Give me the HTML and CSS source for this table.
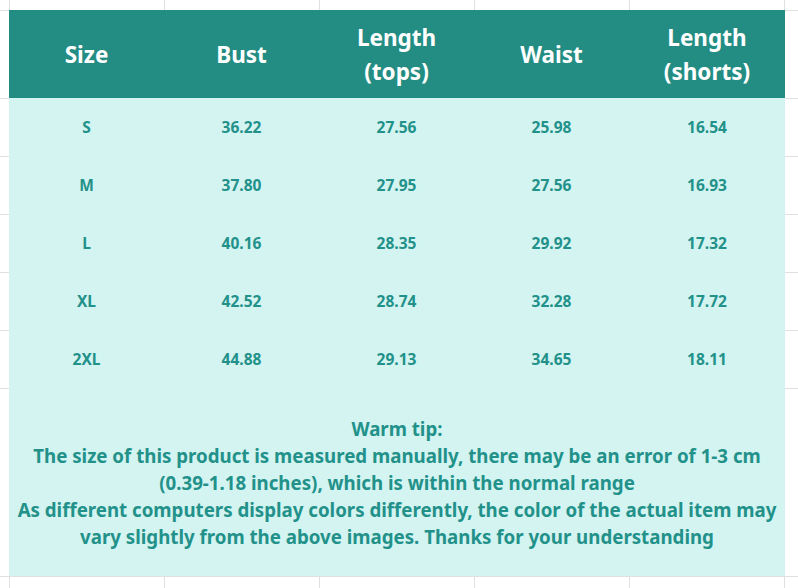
FILE: index.html
```html
<!DOCTYPE html>
<html>
<head>
<meta charset="utf-8">
<link rel="stylesheet" href="styles.css">
</head>
<body>
<div class="sheet">
  <div class="chart">
    <div class="head">Size</div>
    <div class="head">Bust</div>
    <div class="head">Length<br>(tops)</div>
    <div class="head">Waist</div>
    <div class="head">Length<br>(shorts)</div>

    <div class="cell">S</div><div class="cell">36.22</div><div class="cell">27.56</div><div class="cell">25.98</div><div class="cell">16.54</div>
    <div class="cell">M</div><div class="cell">37.80</div><div class="cell">27.95</div><div class="cell">27.56</div><div class="cell">16.93</div>
    <div class="cell">L</div><div class="cell">40.16</div><div class="cell">28.35</div><div class="cell">29.92</div><div class="cell">17.32</div>
    <div class="cell">XL</div><div class="cell">42.52</div><div class="cell">28.74</div><div class="cell">32.28</div><div class="cell">17.72</div>
    <div class="cell">2XL</div><div class="cell">44.88</div><div class="cell">29.13</div><div class="cell">34.65</div><div class="cell">18.11</div>

    <div class="tip">
      Warm tip:<br>
      The size of this product is measured manually, there may be an error of 1-3 cm<br>
      (0.39-1.18 inches), which is within the normal range<br>
      As different computers display colors differently, the color of the actual item may<br>
      vary slightly from the above images. Thanks for your understanding
    </div>
  </div>
</div>
</body>
</html>
```
FILE: styles.css
```css
html, body {
  margin: 0;
  padding: 0;
}
body {
  width: 798px;
  height: 588px;
  overflow: hidden;
  background-color: #ffffff;
  background-image:
    linear-gradient(to right, #e0e0e0 1px, transparent 1px),
    linear-gradient(#e0e0e0, #e0e0e0),
    linear-gradient(#e0e0e0, #e0e0e0),
    linear-gradient(#e0e0e0, #e0e0e0),
    linear-gradient(#e0e0e0, #e0e0e0),
    linear-gradient(#e0e0e0, #e0e0e0),
    linear-gradient(#e0e0e0, #e0e0e0),
    linear-gradient(#e0e0e0, #e0e0e0),
    linear-gradient(#e0e0e0, #e0e0e0);
  background-size:
    155px 100%,
    100% 1px, 100% 1px, 100% 1px, 100% 1px,
    100% 1px, 100% 1px, 100% 1px, 100% 1px;
  background-position:
    9px 0,
    0 10px, 0 98px, 0 156px, 0 214px,
    0 272px, 0 330px, 0 388px, 0 576px;
  background-repeat: repeat-x, no-repeat, no-repeat, no-repeat, no-repeat,
    no-repeat, no-repeat, no-repeat, no-repeat;
  font-family: "Noto Sans", "Open Sans", sans-serif;
}
.sheet {
  padding: 10px 0 0 9px;
}
.chart {
  display: grid;
  grid-template-columns: repeat(4, 155px) 156px;
  grid-template-rows: 88px repeat(5, 58px) 188px;
  background: #d3f4f1;
  width: 776px;
}
.head {
  background: #238d84;
  color: #ffffff;
  font-weight: 700;
  font-size: 22.5px;
  line-height: 34px;
  padding-top: 2px;
  display: flex;
  align-items: center;
  justify-content: center;
  text-align: center;
}
.cell {
  color: #22918a;
  font-weight: 700;
  font-size: 15.5px;
  display: flex;
  align-items: center;
  justify-content: center;
}
.tip {
  grid-column: 1 / -1;
  display: flex;
  align-items: center;
  justify-content: center;
  text-align: center;
  color: #22918a;
  font-weight: 700;
  font-size: 18.7px;
  line-height: 27px;
}
```
